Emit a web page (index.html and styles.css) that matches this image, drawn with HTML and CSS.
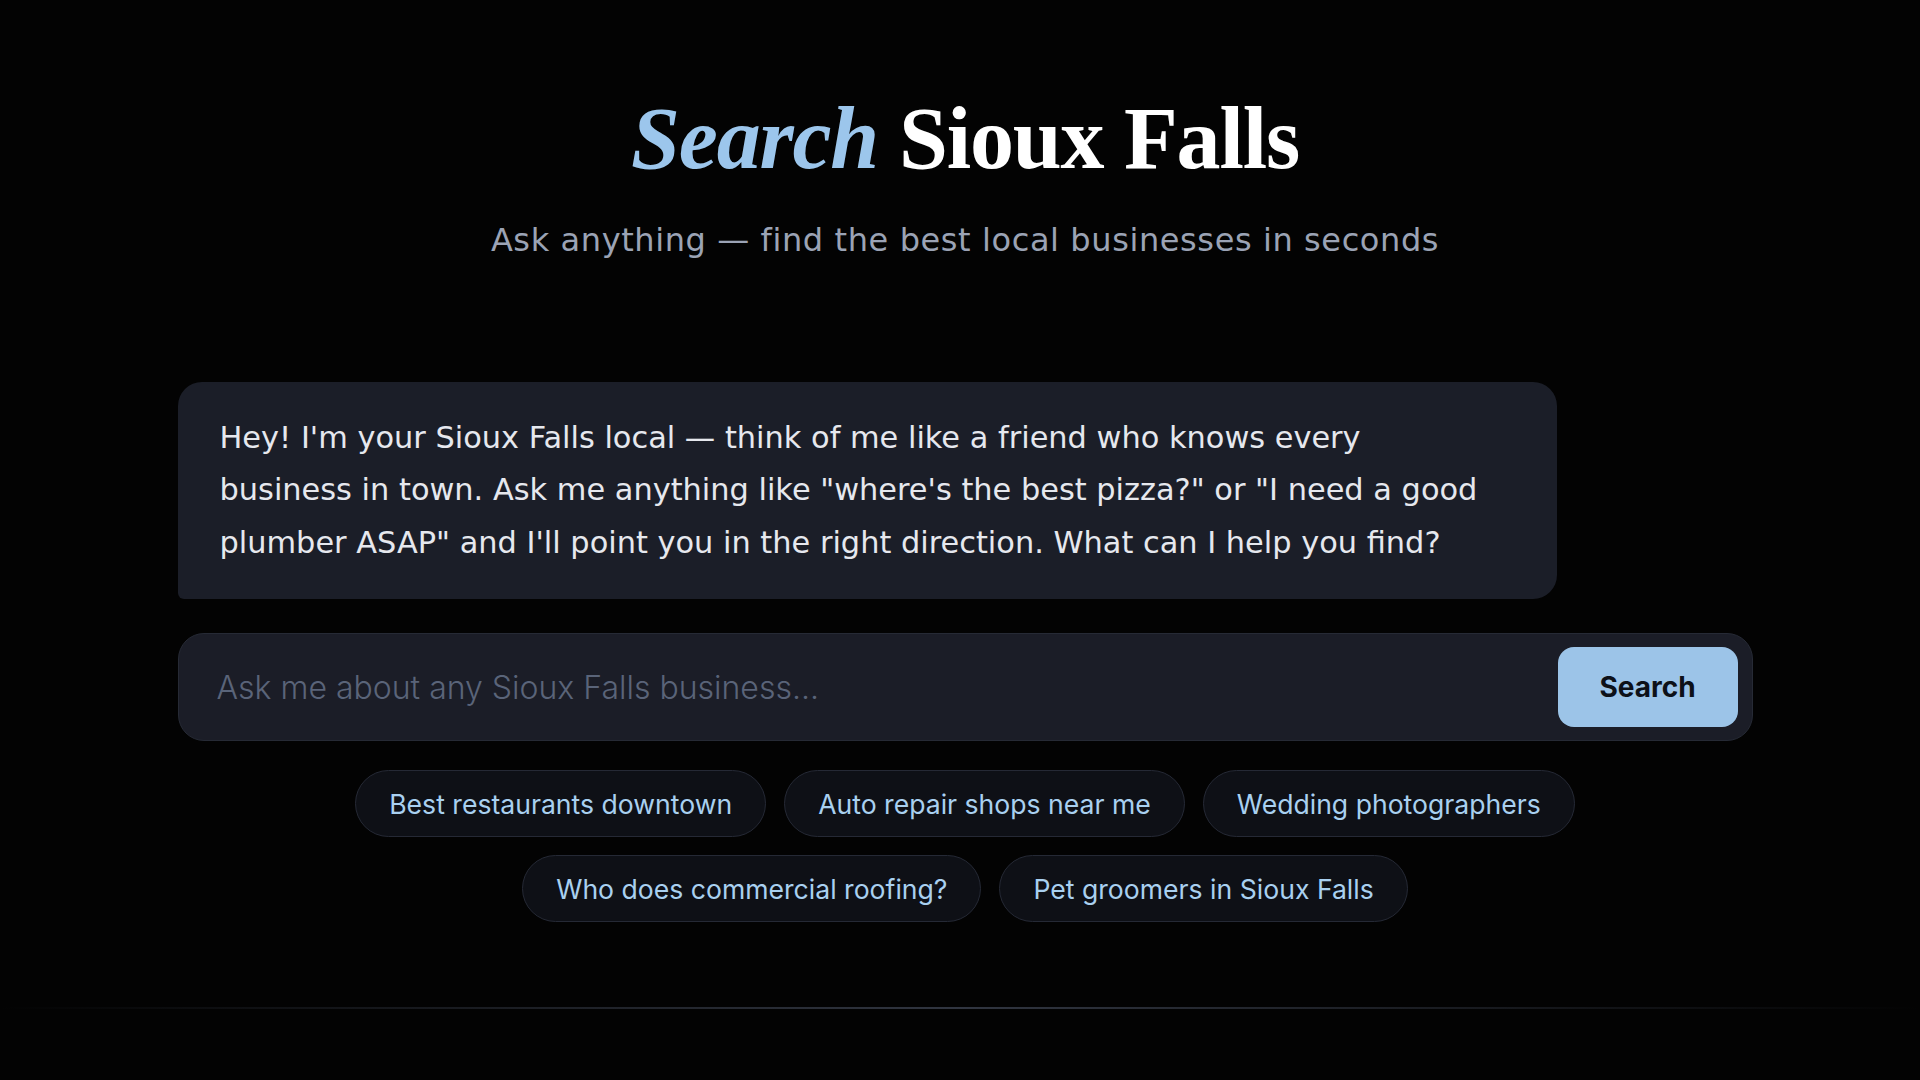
FILE: index.html
```html
<!DOCTYPE html>
<html lang="en">
<head>
<meta charset="utf-8">
<title>Search Sioux Falls</title>
<link rel="stylesheet" href="styles.css">
</head>
<body>
<div class="page">
  <header class="hero">
    <h1 class="title"><span class="title-accent">Search</span> Sioux Falls</h1>
    <p class="subtitle">Ask anything — find the best local businesses in seconds</p>
  </header>
  <main class="chat">
    <div class="bubble">Hey! I'm your Sioux Falls local — think of me like a friend who knows every business in town. Ask me anything like "where's the best pizza?" or "I need a good plumber ASAP" and I'll point you in the right direction. What can I help you find?</div>
    <form class="searchbar">
      <input class="search-input" type="text" placeholder="Ask me about any Sioux Falls business...">
      <button class="search-btn" type="button">Search</button>
    </form>
    <div class="chips">
      <button class="chip" type="button">Best restaurants downtown</button>
      <button class="chip" type="button">Auto repair shops near me</button>
      <button class="chip" type="button">Wedding photographers</button>
      <button class="chip" type="button">Who does commercial roofing?</button>
      <button class="chip" type="button">Pet groomers in Sioux Falls</button>
    </div>
  </main>
</div>
<footer class="footer"><div class="footer-line"></div></footer>
</body>
</html>
```

FILE: styles.css
```css
* { box-sizing: border-box; }
html, body { margin: 0; padding: 0; }
body {
  background: #030303;
  width: 1920px;
  height: 1080px;
  overflow: hidden;
  font-family: "DejaVu Sans", "Noto Sans", sans-serif;
}
.page {
  padding-left: 10px;
}
.hero {
  text-align: center;
  padding-top: 86px;
}
.title {
  margin: 0;
  font-family: "Liberation Serif", "DejaVu Serif", serif;
  font-weight: 700;
  font-size: 88px;
  line-height: 1.2;
  letter-spacing: -1.2px;
  color: #ffffff;
}
.title-accent {
  font-style: italic;
  color: #9cc6ec;
}
.subtitle {
  margin: 29px 0 0;
  font-size: 32px;
  font-weight: 400;
  letter-spacing: 0.6px;
  color: #9ba3b5;
  line-height: 39px;
}
.chat {
  width: 1575px;
  margin: 122px auto 0;
}
.bubble {
  width: 1379px;
  background: #1b1e28;
  border-radius: 24px 24px 24px 6px;
  padding: 30px 61px 30px 42px;
  color: #e6e8ee;
  font-size: 30.4px;
  line-height: 52.5px;
}
.searchbar {
  margin: 34px 0 0;
  display: flex;
  align-items: center;
  gap: 14px;
  height: 108px;
  padding: 14px;
  background: #1b1d27;
  border: 1px solid #262a35;
  border-radius: 26px;
}
.search-input {
  flex: 1;
  background: transparent;
  border: none;
  outline: none;
  padding: 0 0 0 24px;
  font-family: "Inter", "Lato", sans-serif;
  font-weight: 300;
  font-size: 32px;
  color: #e6e8ee;
}
.search-input::placeholder { color: #5a6479; }
.search-btn {
  width: 180px;
  height: 80px;
  border: none;
  border-radius: 16px;
  background: #9cc4e8;
  color: #0d1118;
  font-family: "Inter", "Lato", sans-serif;
  font-weight: 700;
  font-size: 28px;
}
.chips {
  margin: 29px auto 0;
  width: 1300px;
  display: flex;
  flex-wrap: wrap;
  justify-content: center;
  gap: 18px 18px;
}
.chip {
  height: 67px;
  padding: 0 33px;
  border-radius: 34px;
  background: #0e1016;
  border: 1px solid #252935;
  color: #a9d0f0;
  font-family: "Inter", "Lato", sans-serif;
  font-size: 26.6px;
  font-weight: 400;
}
.footer {
  position: absolute;
  left: 0;
  right: 0;
  top: 1007px;
}
.footer-line {
  height: 2px;
  background: linear-gradient(90deg, rgba(60,66,80,0) 0%, rgba(60,66,80,0.8) 50%, rgba(60,66,80,0) 100%);
}
```
